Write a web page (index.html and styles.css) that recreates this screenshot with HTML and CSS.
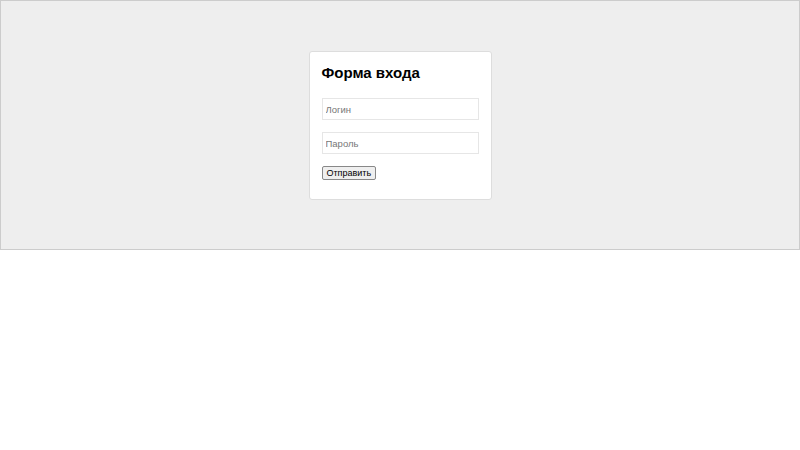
FILE: index.html
```html
<!DOCTYPE html>
<html lang="ru">
<head>
<meta charset="utf-8">
<title>Форма входа</title>
<link rel="stylesheet" href="styles.css">
</head>
<body>
<div class="stage">
  <form class="card">
    <h2 class="title">Форма входа</h2>
    <input class="field" type="text" placeholder="Логин">
    <input class="field" type="password" placeholder="Пароль">
    <button class="submit" type="button">Отправить</button>
  </form>
</div>
</body>
</html>
```

FILE: styles.css
```css
html, body {
  margin: 0;
  padding: 0;
  background: #fff;
  font-family: "Liberation Sans", Arial, sans-serif;
}
.stage {
  box-sizing: border-box;
  height: 250px;
  padding-top: 50px;
  background: #eeeeee;
  border: 1px solid #cccccc;
  display: flex;
  align-items: flex-start;
  justify-content: center;
}
.card {
  width: 157px;
  padding: 12px 12px 19px;
  background: #fff;
  border: 1px solid #dddddd;
  border-radius: 3px;
  display: flex;
  flex-direction: column;
  align-items: flex-start;
}
.title {
  margin: 0 0 16px;
  font-size: 15px;
  line-height: 18px;
  font-weight: bold;
  color: #000;
}
.field {
  box-sizing: border-box;
  width: 157px;
  height: 22px;
  margin: 0 0 12px;
  padding: 0 3px;
  border: 1px solid #e6e6e6;
  font: 9.5px "Liberation Sans", Arial, sans-serif;
  color: #222;
  outline: none;
}
.field::placeholder {
  color: #777;
}
.submit {
  box-sizing: border-box;
  margin: 0;
  padding: 0 4px;
  height: 14px;
  font: 9px "Liberation Sans", Arial, sans-serif;
  line-height: 12px;
  color: #000;
  background: #efefef;
  border: 1px solid #888;
  border-radius: 2px;
}
```
